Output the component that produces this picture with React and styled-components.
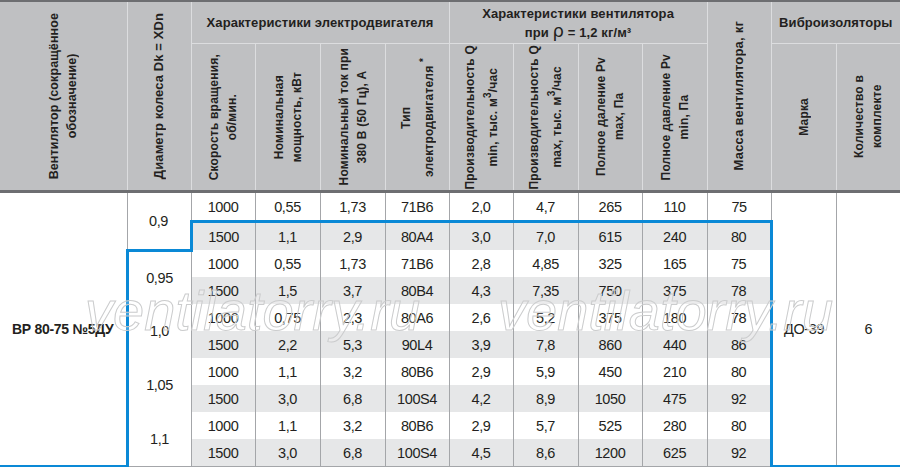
import React from "react";
import styled, { createGlobalStyle } from "styled-components";

const GlobalStyle = createGlobalStyle`
  html, body {
    margin: 0;
    padding: 0;
    background: #fff;
  }
  body {
    font-family: "Liberation Sans", Arial, sans-serif;
    color: #231f20;
  }
`;

const BLUE = "3px solid #0a89d6";
const GRID = "1px solid #a4a6a9";

const Wrap = styled.div`
  position: relative;
  width: 900px;
  height: 467px;
  overflow: hidden;
`;

const Table = styled.table`
  width: 900px;
  table-layout: fixed;
  border-collapse: collapse;
`;

const Col = styled.col`
  width: ${(p) => p.$w}px;
`;

const Th = styled.th`
  background: #bfc0c2;
  padding: 0;
  border: 1px solid #dcdddf;
  border-top: ${(p) => (p.$top ? "2px solid #6d6e71" : "1px solid #dcdddf")};
  border-bottom: ${(p) => (p.$bottom ? "3px solid #6d6e71" : "1px solid #dcdddf")};
  border-left: ${(p) => (p.$first ? "none" : "1px solid #dcdddf")};
  border-right: ${(p) => (p.$last ? "none" : "1px solid #dcdddf")};
  font-weight: bold;
  font-size: 13px;
  letter-spacing: 0.1px;
  color: #231f20;
  text-align: center;
  vertical-align: middle;
`;

const HeadBox = styled.div`
  height: ${(p) => p.$h}px;
  display: flex;
  align-items: center;
  justify-content: center;
  line-height: 17px;
`;

const Vert = styled.div`
  writing-mode: vertical-rl;
  transform: rotate(180deg);
  white-space: nowrap;
  text-align: center;
  font-size: ${(p) => p.$size || 12}px;
  letter-spacing: ${(p) => p.$ls || 0.2}px;
  line-height: 18px;
`;

const Rho = styled.span`
  font-size: 18px;
  font-family: "DejaVu Sans", sans-serif;
  font-weight: normal;
`;

const Td = styled.td`
  height: 27px;
  padding: 0;
  font-size: ${(p) => (p.$bold ? 14 : 14.5)}px;
  letter-spacing: ${(p) => (p.$bold ? -0.3 : -0.4)}px;
  text-align: center;
  vertical-align: middle;
  font-weight: ${(p) => (p.$bold ? "bold" : "normal")};
  background: ${(p) => (p.$shade ? "#e6e7e8" : "#fff")};
  border-top: ${(p) => (p.$bt ? BLUE : "none")};
  border-bottom: ${(p) => (p.$bb ? BLUE : p.$gb ? GRID : "none")};
  border-left: ${(p) => (p.$bl ? BLUE : p.$nl ? "none" : GRID)};
  border-right: ${(p) => (p.$br ? BLUE : p.$nr ? "none" : GRID)};
`;

const Watermark = styled.span`
  position: absolute;
  top: ${(p) => p.$top}px;
  left: ${(p) => p.$left}px;
  font-family: "Liberation Sans", sans-serif;
  font-style: italic;
  font-size: 56px;
  line-height: 1;
  color: rgba(255, 255, 255, 0.2);
  -webkit-text-stroke: 1px #cbcccd;
  white-space: nowrap;
  pointer-events: none;
`;

const diameters = ["0,9", "0,95", "1,0", "1,05", "1,1"];

const rows = [
  ["1000", "0,55", "1,73", "71В6", "2,0", "4,7", "265", "110", "75"],
  ["1500", "1,1", "2,9", "80А4", "3,0", "7,0", "615", "240", "80"],
  ["1000", "0,55", "1,73", "71В6", "2,8", "4,85", "325", "165", "75"],
  ["1500", "1,5", "3,7", "80В4", "4,3", "7,35", "750", "375", "78"],
  ["1000", "0,75", "2,3", "80А6", "2,6", "5,2", "375", "180", "78"],
  ["1500", "2,2", "5,3", "90L4", "3,9", "7,8", "860", "440", "86"],
  ["1000", "1,1", "3,2", "80В6", "2,9", "5,9", "450", "210", "80"],
  ["1500", "3,0", "6,8", "100S4", "4,2", "8,9", "1050", "475", "92"],
  ["1000", "1,1", "3,2", "80В6", "2,9", "5,7", "525", "280", "80"],
  ["1500", "3,0", "6,8", "100S4", "4,5", "8,6", "1200", "625", "92"],
];

const subHeads = [
  ["Скорость вращения,", "об/мин."],
  ["Номинальная", "мощность, кВт"],
  ["Номинальный ток при", "380 В (50 Гц), А"],
  ["Тип", <>электродвигателя <sup>*</sup></>],
  ["Производительность Q", <>min, тыс. м<sup>3</sup>/час</>],
  ["Производительность Q", <>max, тыс. м<sup>3</sup>/час</>],
  ["Полное даление Pv", "max, Па"],
  ["Полное давление Pv", "min, Па"],
];

const VertText = ({ lines, size, ls }) => (
  <Vert $size={size} $ls={ls}>
    {lines.map((l, i) => (
      <React.Fragment key={i}>
        {i > 0 && <br />}
        {l}
      </React.Fragment>
    ))}
  </Vert>
);

export default function App() {
  const widths = [127, 64, 64, 65, 65, 64, 64, 65, 64, 65, 64, 65, 64];
  return (
    <Wrap>
      <GlobalStyle />
      <Table>
        <colgroup>
          {widths.map((w, i) => (
            <Col key={i} $w={w} />
          ))}
        </colgroup>
        <thead>
          <tr>
            <Th rowSpan={2} $top $bottom $first>
              <HeadBox $h={186}>
                <VertText
                  size={12.5}
                  ls={0.1}
                  lines={["Вентилятор (сокращённое", "обозначение)"]}
                />
              </HeadBox>
            </Th>
            <Th rowSpan={2} $top $bottom>
              <HeadBox $h={186}>
                <VertText size={13} ls={0.1} lines={["Диаметр колеса Dk = XDn"]} />
              </HeadBox>
            </Th>
            <Th colSpan={4} $top>
              <HeadBox $h={41}>Характеристики электродвигателя</HeadBox>
            </Th>
            <Th colSpan={4} $top>
              <HeadBox $h={41}>
                <div>
                  Характеристики вентилятора
                  <br />
                  при <Rho>ρ</Rho> = 1,2 кг/м³
                </div>
              </HeadBox>
            </Th>
            <Th rowSpan={2} $top $bottom>
              <HeadBox $h={186}>
                <VertText size={13} lines={["Масса вентилятора, кг"]} />
              </HeadBox>
            </Th>
            <Th colSpan={2} $top $last>
              <HeadBox $h={41}>Виброизоляторы</HeadBox>
            </Th>
          </tr>
          <tr>
            {subHeads.map((lines, i) => (
              <Th key={i} $bottom>
                <HeadBox $h={146}>
                  <VertText lines={lines} />
                </HeadBox>
              </Th>
            ))}
            <Th $bottom>
              <HeadBox $h={146}>
                <VertText lines={["Марка"]} />
              </HeadBox>
            </Th>
            <Th $bottom $last>
              <HeadBox $h={146}>
                <VertText lines={["Количество в", "комплекте"]} />
              </HeadBox>
            </Th>
          </tr>
        </thead>
        <tbody>
          {rows.map((row, r) => {
            const last = r === rows.length - 1;
            return (
              <tr key={r}>
                {r === 0 && (
                  <Td rowSpan={10} $bold $nl $bb>
                    ВР 80-75 №5ДУ
                  </Td>
                )}
                {r % 2 === 0 && (
                  <Td rowSpan={2} $bl={r > 0} $bt={r === 2} $gb={r === 8}>
                    {diameters[r / 2]}
                  </Td>
                )}
                {row.map((v, c) => (
                  <Td
                    key={c}
                    $shade={r % 2 === 1}
                    $bt={r === 1}
                    $bl={r === 1 && c === 0}
                    $br={r >= 1 && c === row.length - 1}
                    $gb={last}
                  >
                    {v}
                  </Td>
                ))}
                {r === 0 && (
                  <>
                    <Td rowSpan={10} $bb>
                      ДО-39
                    </Td>
                    <Td rowSpan={10} $bb $nr>
                      6
                    </Td>
                  </>
                )}
              </tr>
            );
          })}
        </tbody>
      </Table>
      <Watermark $top={283} $left={85}>
        ventilatorry.ru
      </Watermark>
      <Watermark $top={283} $left={498}>
        ventilatorry.ru
      </Watermark>
    </Wrap>
  );
}
